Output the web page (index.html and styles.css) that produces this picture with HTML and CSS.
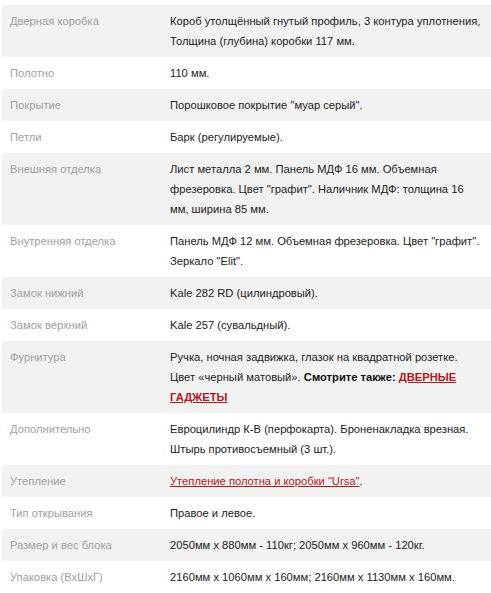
FILE: index.html
```html
<!DOCTYPE html>
<html lang="ru">
<head>
<meta charset="utf-8">
<link rel="stylesheet" href="styles.css">
</head>
<body>
<table class="specs">
  <tr><td class="label">Дверная коробка</td><td class="value">Короб утолщённый гнутый профиль, 3 контура уплотнения, Толщина (глубина) коробки 117 мм.</td></tr>
  <tr><td class="label">Полотно</td><td class="value">110 мм.</td></tr>
  <tr><td class="label">Покрытие</td><td class="value">Порошковое покрытие "муар серый".</td></tr>
  <tr><td class="label">Петли</td><td class="value">Барк (регулируемые).</td></tr>
  <tr><td class="label">Внешняя отделка</td><td class="value">Лист металла 2 мм. Панель МДФ 16 мм. Объемная фрезеровка. Цвет "графит". Наличник МДФ: толщина 16 мм, ширина 85 мм.</td></tr>
  <tr><td class="label">Внутренняя отделка</td><td class="value">Панель МДФ 12 мм. Объемная фрезеровка. Цвет "графит". Зеркало "Elit".</td></tr>
  <tr><td class="label">Замок нижний</td><td class="value">Kale 282 RD (цилиндровый).</td></tr>
  <tr><td class="label">Замок верхний</td><td class="value">Kale 257 (сувальдный).</td></tr>
  <tr><td class="label">Фурнитура</td><td class="value">Ручка, ночная задвижка, глазок на квадратной розетке. Цвет «черный матовый». <span class="bold">Смотрите также:</span> <a class="link bold" href="#">ДВЕРНЫЕ ГАДЖЕТЫ</a></td></tr>
  <tr><td class="label">Дополнительно</td><td class="value">Евроцилиндр К-В (перфокарта). Броненакладка врезная. Штырь противосъемный (3 шт.).</td></tr>
  <tr><td class="label">Утепление</td><td class="value"><a class="link" href="#">Утепление полотна и коробки "Ursa"</a>.</td></tr>
  <tr><td class="label">Тип открывания</td><td class="value">Правое и левое.</td></tr>
  <tr><td class="label">Размер и вес блока</td><td class="value">2050мм x 880мм - 110кг; 2050мм x 960мм - 120кг.</td></tr>
  <tr><td class="label">Упаковка (ВхШхГ)</td><td class="value">2160мм x 1060мм x 160мм; 2160мм x 1130мм x 160мм.</td></tr>
</table>
</body>
</html>
```

FILE: styles.css
```css
html, body {
  margin: 0;
  padding: 0;
  background: #fff;
}
body {
  padding: 5px 0 0 2px;
  font-family: "Liberation Sans", Arial, sans-serif;
  font-size: 11.2px;
  line-height: 20px;
  color: #333;
}
.specs {
  width: 489px;
  border-collapse: collapse;
  border-spacing: 0;
}
.specs tr:nth-child(odd) {
  background: #f2f2f2;
}
.specs td {
  padding: 6px 8px;
  vertical-align: top;
}
.label {
  width: 144px;
  color: #a0a0a0;
}
.value {
  color: #222;
}
.bold {
  font-weight: bold;
  color: #111;
}
.link {
  color: #b3161c;
  text-decoration: underline;
}
```
